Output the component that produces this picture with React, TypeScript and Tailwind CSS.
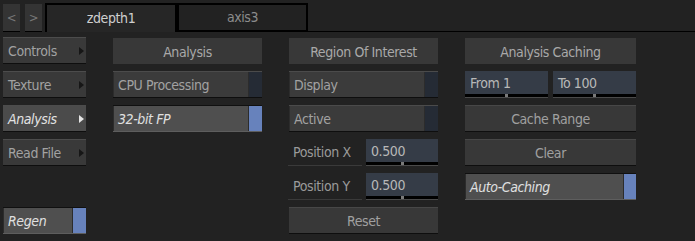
import type { ReactNode } from 'react';

const font = "font-['DejaVu_Sans_Condensed','DejaVu_Sans',sans-serif] font-stretch-condensed";

function Tri({ light }: { light?: boolean }) {
  return (
    <span
      className={`w-0 h-0 border-y-[4px] border-y-transparent border-l-[5px] ${light ? 'border-l-[#e6e6e6]' : 'border-l-[#161616]'}`}
    />
  );
}

function MenuButton({ label, active }: { label: string; active?: boolean }) {
  return (
    <div
      className={`h-[27px] flex items-center justify-between pl-[5px] pr-[2px] border-t border-b border-t-[#4c4c4c] border-b-[#0e0e0e] ${
        active ? 'bg-[#4b4b4b] text-[#e2e2e2] italic' : 'bg-[#393939] text-[#a2a2a2]'
      }`}
    >
      <span className="pt-[2px]">{label}</span>
      <Tri light={active} />
    </div>
  );
}

function Header({ children }: { children: ReactNode }) {
  return (
    <div className="mt-[1px] h-[26px] pt-[2px] bg-[#383838] text-[#a9a9a9] flex items-center justify-center">
      {children}
    </div>
  );
}

function Toggle({ label, on, ind = 'w-[13px]' }: { label: string; on?: boolean; ind?: string }) {
  return (
    <div
      className={`h-[27px] flex border-t border-b ${
        on ? 'border-t-[#101010] border-b-[#5e5e5e]' : 'border-t-[#4b4b4b] border-b-[#0e0e0e]'
      }`}
    >
      <div
        className={`flex-1 flex items-center pl-[4px] pt-[2px] border-l border-r border-[#2c2c2c] ${
          on ? 'bg-[#4f4f4f] text-[#e0e0e0] italic' : 'bg-[#3b3b3b] text-[#a2a2a2]'
        }`}
      >
        {label}
      </div>
      <div className={`${ind} ${on ? 'bg-[#6782bc]' : 'bg-[#252b35]'}`} />
    </div>
  );
}

function Button({ label }: { label: string }) {
  return (
    <div className="h-[27px] pt-[2px] flex items-center justify-center bg-[#383838] text-[#a0a0a0] border-t border-b border-t-[#474747] border-b-[#0e0e0e]">
      {label}
    </div>
  );
}

function Field({ value, className = '' }: { value: string; className?: string }) {
  return (
    <div className={`h-[27px] flex flex-col bg-[#353c47] ${className}`}>
      <div className="flex-1 flex items-center pl-[5px] pt-[2px] text-[#b8b8b8]">{value}</div>
      <div className="h-[4px] bg-black flex justify-center">
        <div className="w-[3px] bg-[#7a7a7a]" />
      </div>
      <div className="h-[1px] bg-[#4a4a4a]" />
    </div>
  );
}

function ParamRow({ label, value }: { label: string; value: string }) {
  return (
    <div className="flex h-[27px] gap-[4px]">
      <div className="w-[74px] -ml-[1px] flex items-end pb-[2px] pl-[5px] text-[#9a9a9a] border-b border-[#3a3a3a]">
        {label}
      </div>
      <Field value={value} className="flex-1" />
    </div>
  );
}

export default function App() {
  return (
    <div className={`w-[695px] h-[241px] bg-[#222222] overflow-hidden text-[14px] tracking-[-0.4px] ${font}`}>
      {/* tab strip */}
      <div className="flex items-end h-[32px] pl-[3px] pt-[3px]">
        <div className="w-[17px] h-[28px] bg-[#343434] border-b border-black text-[#777] flex items-center justify-center text-[13px]">
          &lt;
        </div>
        <div className="w-[17px] h-[28px] ml-[5px] bg-[#343434] border-b border-black text-[#777] flex items-center justify-center text-[13px]">
          &gt;
        </div>
        <div className="ml-[3px] w-[132px] h-[29px] border-t-2 border-x-2 border-black bg-[#262626] text-[#cfcfcf] flex items-center justify-center">
          zdepth1
        </div>
        <div className="w-[131px] h-[29px] border-2 border-black bg-[#222222] text-[#8c8c8c] flex items-center justify-center">
          axis3
        </div>
        <div className="flex-1 h-[29px] border-b border-black" />
      </div>

      {/* body */}
      <div className="flex gap-[27px] px-[3px] pt-[5px]">
        <div className="w-[83px] flex flex-col gap-[7px]">
          <MenuButton label="Controls" />
          <MenuButton label="Texture" />
          <MenuButton label="Analysis" active />
          <MenuButton label="Read File" />
          <div className="h-[27px]" />
          <Toggle label="Regen" on />
        </div>

        <div className="w-[149px] flex flex-col gap-[7px]">
          <Header>Analysis</Header>
          <Toggle label="CPU Processing" />
          <Toggle label="32-bit FP" on />
        </div>

        <div className="w-[149px] flex flex-col gap-[7px]">
          <Header>Region Of Interest</Header>
          <Toggle label="Display" />
          <Toggle label="Active" />
          <ParamRow label="Position X" value="0.500" />
          <ParamRow label="Position Y" value="0.500" />
          <Button label="Reset" />
        </div>

        <div className="w-[171px] flex flex-col gap-[7px]">
          <Header>Analysis Caching</Header>
          <div className="flex gap-[5px]">
            <Field value="From 1" className="flex-1" />
            <Field value="To 100" className="flex-1" />
          </div>
          <Button label="Cache Range" />
          <Button label="Clear" />
          <Toggle label="Auto-Caching" on ind="w-[12px]" />
        </div>
      </div>
    </div>
  );
}
